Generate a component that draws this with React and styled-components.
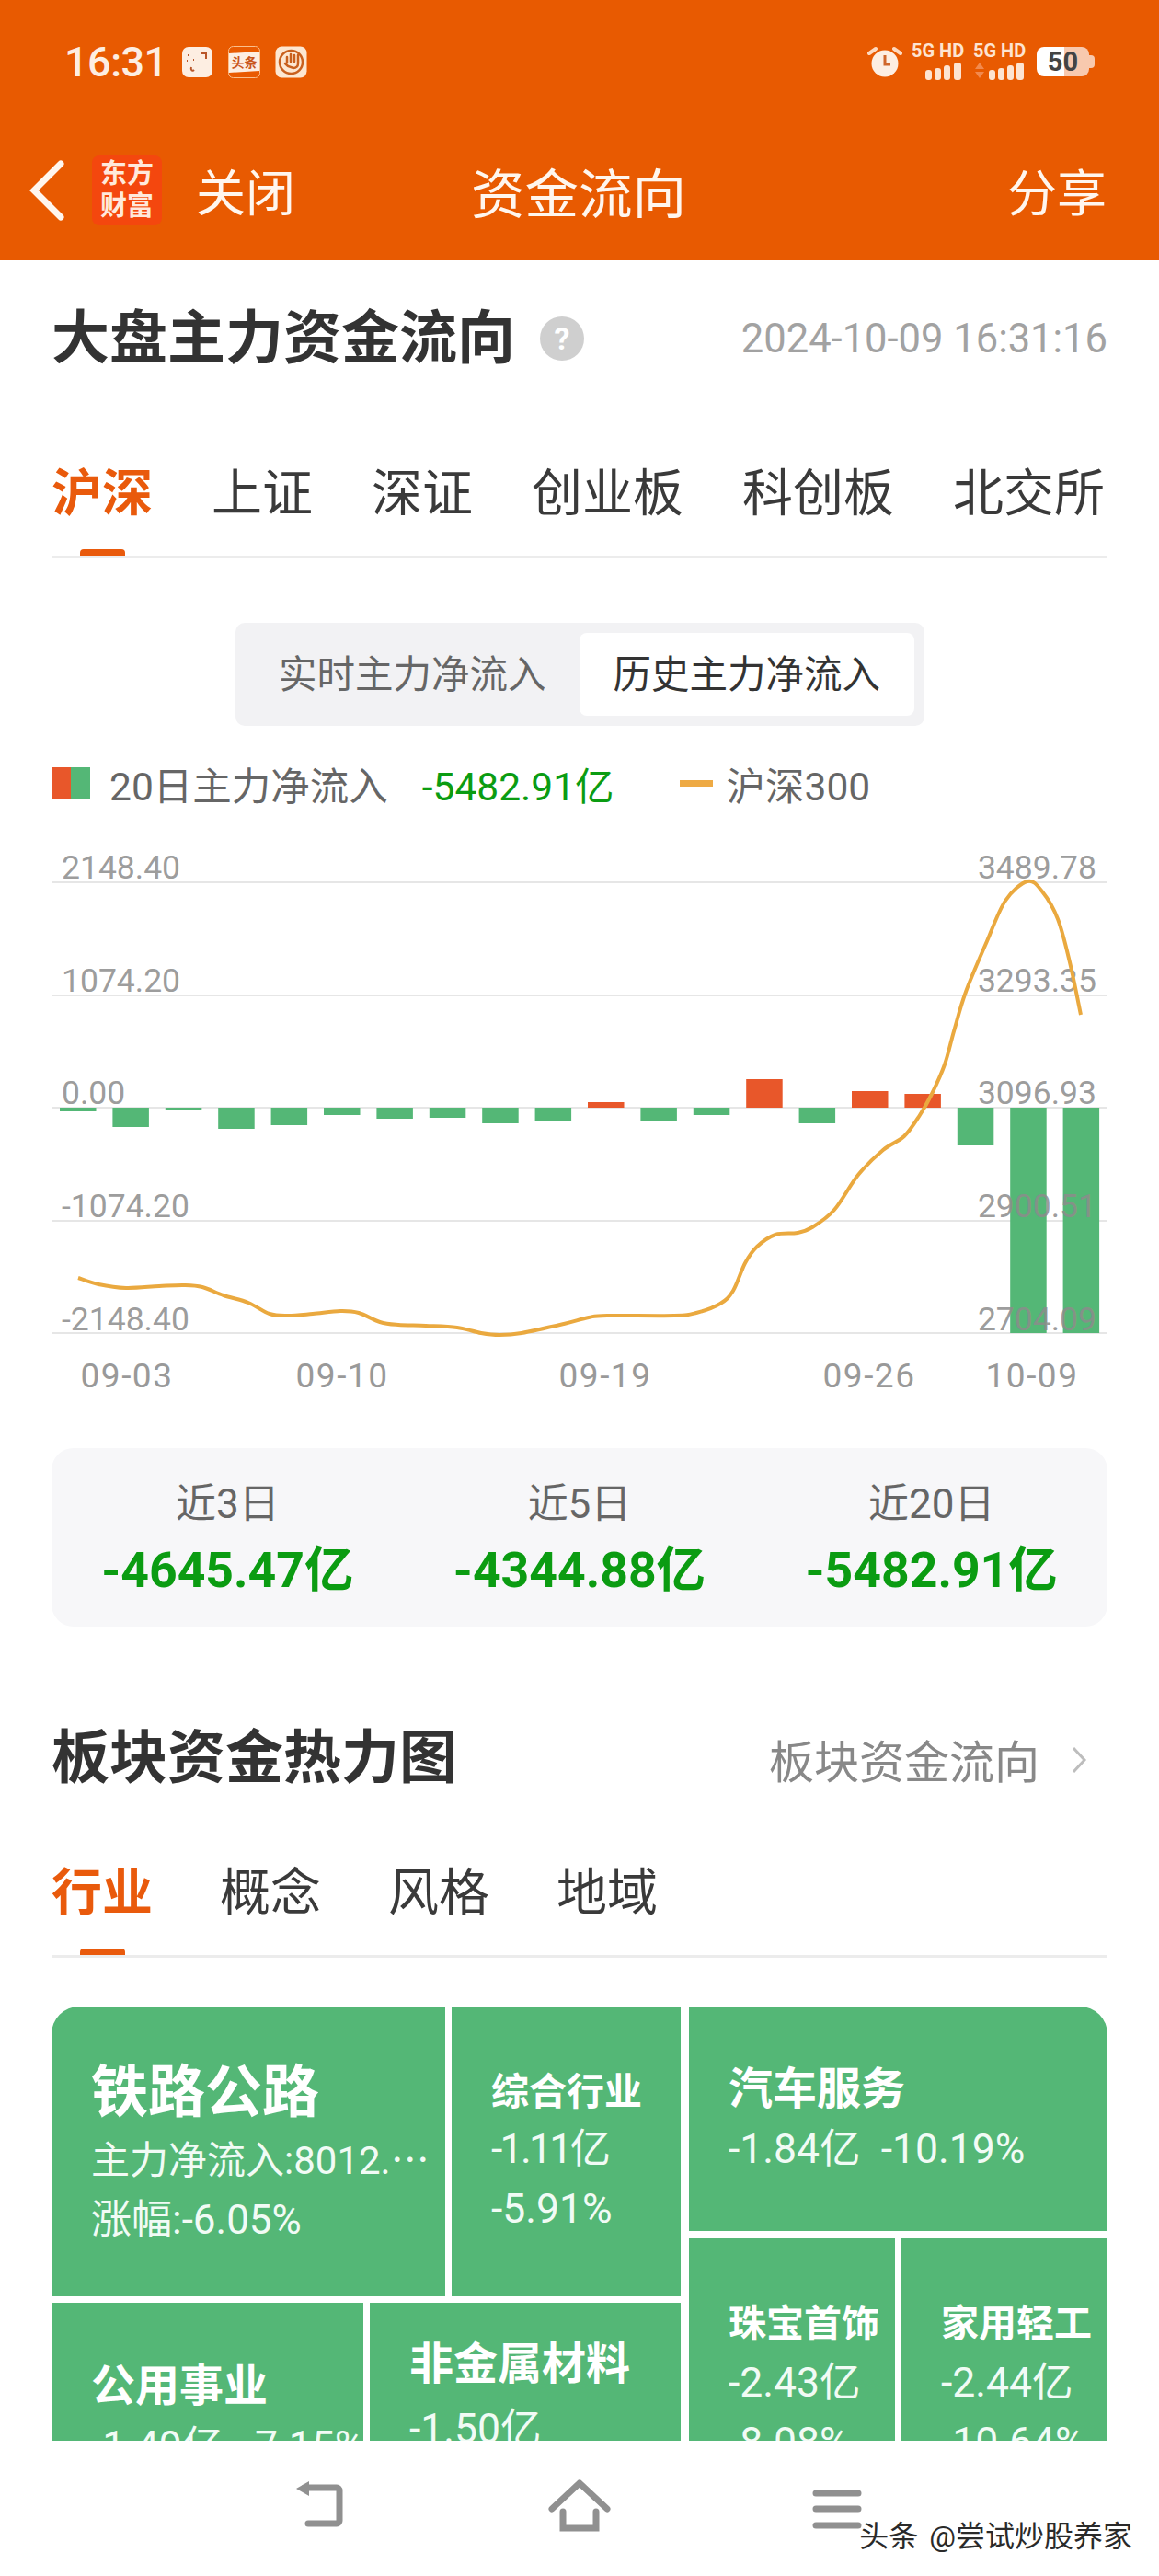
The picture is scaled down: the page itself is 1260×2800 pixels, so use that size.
import styled, { createGlobalStyle } from 'styled-components'

const GlobalStyle = createGlobalStyle`
  html, body {
    margin: 0;
    padding: 0;
    background: #fff;
  }
  body {
    font-family: Roboto, "Noto Sans CJK SC", sans-serif;
    color: #333;
  }
  * {
    box-sizing: border-box;
  }
`

const Page = styled.div`
  position: relative;
  width: 1260px;
  height: 2800px;
  display: flex;
  flex-direction: column;
  overflow: hidden;
  background: #fff;
`

// ------------------------------------------------ header
const Header = styled.header`
  height: 283px;
  flex: none;
  background: #e85a01;
  color: #fff6ee;
`
const StatusBar = styled.div`
  height: 134px;
  padding: 0 70px 0 70px;
  display: flex;
  align-items: center;
  justify-content: space-between;
`
const StatusLeft = styled.div`
  display: flex;
  align-items: center;
  gap: 16px;
`
const Clock = styled.span`
  font-size: 45px;
  font-weight: 500;
  width: 111px;
  letter-spacing: -0.5px;
  color: #fdeee2;
`
const AppBadge = styled.svg`
  display: block;
  width: 35px;
  height: 35px;
`
const StatusRight = styled.div`
  display: flex;
  align-items: center;
  gap: 10px;
`
const SignalStack = styled.div`
  display: flex;
  flex-direction: column;
  width: 57px;
  gap: 3px;
`
const SignalLabel = styled.span`
  font-size: 20px;
  line-height: 17px;
  font-weight: 700;
  white-space: nowrap;
  color: #fde4d2;
`
const SignalBars = styled.svg`
  display: block;
  width: 57px;
  height: 20px;
`
const Battery = styled.div`
  position: relative;
  width: 57px;
  height: 32px;
  margin-left: 2px;
  margin-right: 6px;
  border-radius: 8px;
  background: linear-gradient(90deg, #fff 53%, #f8c9ae 53%);
  color: #444;
  font-size: 29px;
  font-weight: 700;
  line-height: 32px;
  text-align: center;
  &::after {
    content: '';
    position: absolute;
    right: -6px;
    top: 9px;
    width: 6px;
    height: 14px;
    border-radius: 0 4px 4px 0;
    background: #f8c9ae;
  }
`
const NavBar = styled.div`
  height: 145px;
  padding: 0 57px 0 32px;
  display: grid;
  grid-template-columns: 482px 230px 1fr;
  align-items: center;
`
const NavLeft = styled.div`
  display: flex;
  align-items: center;
`
const BackIcon = styled.svg`
  display: block;
  width: 38px;
  height: 66px;
`
const AppLogo = styled.div`
  width: 76px;
  height: 76px;
  margin-left: 30px;
  padding-top: 3px;
  border-radius: 8px;
  background: #f4470e;
  font-size: 29px;
  line-height: 35px;
  font-weight: 700;
  text-align: center;
  color: #ffe9dc;
`
const CloseLabel = styled.span`
  margin-left: 37px;
  font-size: 54px;
`
const NavTitle = styled.div`
  font-size: 58.5px;
  white-space: nowrap;
  display: flex;
  justify-content: center;
`
const ShareLabel = styled.div`
  font-size: 54px;
  text-align: right;
`

// ------------------------------------------------ main column
const Main = styled.main`
  flex: 1;
  min-height: 0;
  padding: 0 56px;
  display: flex;
  flex-direction: column;
`
const TitleRow = styled.div`
  height: 170px;
  flex: none;
  display: flex;
  align-items: center;
`
const Heading = styled.h2`
  margin: 0;
  font-size: 63px;
  line-height: 70px;
  font-weight: 700;
  color: #333;
  white-space: nowrap;
`
const HelpDot = styled.span`
  width: 48px;
  height: 48px;
  margin-left: 27px;
  border-radius: 50%;
  background: #cfcfcf;
  color: #fff;
  font-size: 34px;
  font-weight: 700;
  line-height: 48px;
  text-align: center;
`
const Stamp = styled.span`
  margin-left: auto;
  font-size: 43.5px;
  color: #a2a2a2;
  white-space: nowrap;
`
const Tabs = styled.div`
  height: ${p => p.$height}px;
  flex: none;
  padding-top: ${p => p.$pad}px;
  display: flex;
  gap: ${p => p.$gap}px;
  border-bottom: 3px solid #ececec;
`
const Tab = styled.div`
  position: relative;
  font-size: 55px;
  line-height: 60px;
  font-weight: ${p => (p.$active ? 700 : 400)};
  color: ${p => (p.$active ? '#e95a0c' : '#3a3a3a')};
  &::after {
    content: '';
    display: ${p => (p.$active ? 'block' : 'none')};
    position: absolute;
    left: 50%;
    bottom: 0;
    width: 49px;
    height: 7px;
    margin-left: -24px;
    border-radius: 4px 4px 0 0;
    background: #e95a0c;
  }
`
const Segment = styled.div`
  width: 749px;
  height: 112px;
  margin: 70px auto 0;
  padding: 11px 11px;
  flex: none;
  display: flex;
  border-radius: 10px;
  background: #f2f2f4;
`
const SegmentItem = styled.div`
  flex: 1;
  border-radius: 8px;
  background: ${p => (p.$on ? '#fff' : 'transparent')};
  color: ${p => (p.$on ? '#333' : '#666')};
  font-size: 41.5px;
  line-height: 91px;
  text-align: center;
  white-space: nowrap;
`
const Legend = styled.div`
  height: 60px;
  margin-top: 32px;
  flex: none;
  display: flex;
  align-items: center;
  font-size: 42.5px;
  color: #666;
`
const LegendSwatch = styled.span`
  width: 42px;
  height: 35px;
  margin-right: 21px;
  background: linear-gradient(90deg, #e8572a 50%, #54b776 50%);
`
const LegendValue = styled.span`
  margin-left: 37px;
  color: #0b9c12;
`
const LegendDash = styled.span`
  width: 36px;
  height: 7px;
  margin: 0 15px 0 71px;
  background: #eeaa44;
`
const ChartBox = styled.svg`
  display: block;
  flex: none;
  width: 1148px;
  height: 660px;
`
const AxisText = styled.text`
  font-family: Roboto, sans-serif;
  font-size: 35.5px;
  fill: rgba(140, 140, 140, 0.87);
`
const DateText = styled.text`
  font-family: Roboto, sans-serif;
  font-size: 37px;
  letter-spacing: 1.5px;
  fill: #999;
`
const StatCard = styled.div`
  height: 194px;
  margin-top: 33px;
  padding-top: 36px;
  flex: none;
  display: grid;
  grid-template-columns: repeat(3, 1fr);
  border-radius: 24px;
  background: #f7f7f9;
  text-align: center;
`
const StatLabel = styled.div`
  font-size: 44px;
  line-height: 50px;
  color: #666;
`
const StatValue = styled.div`
  margin-top: 17px;
  font-size: 53.5px;
  line-height: 60px;
  font-weight: 700;
  color: #0b9c12;
  white-space: nowrap;
`
const SectionHead = styled.div`
  height: 60px;
  margin-top: 113px;
  flex: none;
  display: flex;
  align-items: center;
  justify-content: space-between;
`
const MoreLink = styled.div`
  display: flex;
  align-items: center;
  gap: 35px;
  padding-right: 22px;
  font-size: 49px;
  color: #888;
`
const MoreArrow = styled.svg`
  display: block;
  width: 17px;
  height: 32px;
  margin-top: 4px;
`

// ------------------------------------------------ treemap
const Treemap = styled.div`
  flex: 1;
  min-height: 0;
  margin-top: 53px;
  display: flex;
  align-items: flex-start;
  gap: 9px;
  overflow: hidden;
  border-radius: 30px 30px 0 0;
`
const TreeColumn = styled.div`
  width: ${p => p.$w}px;
  flex: none;
  display: flex;
  flex-direction: column;
  gap: ${p => p.$gap}px;
`
const TreeRow = styled.div`
  display: flex;
  gap: 7px;
`
const Tile = styled.div`
  width: ${p => p.$w}px;
  height: ${p => p.$h}px;
  flex: none;
  padding: ${p => p.$top}px 0 0 43px;
  background: #54b776;
  color: #fff;
  overflow: hidden;
  white-space: pre;
`
const TileName = styled.div`
  font-size: ${p => p.$size}px;
  line-height: ${p => p.$line}px;
  font-weight: 700;
`
const TileLine = styled.div`
  margin-top: ${p => p.$gap || 0}px;
  font-size: ${p => p.$size || 44.5}px;
  line-height: ${p => p.$line || 65}px;
  letter-spacing: ${p => p.$track || 0}px;
  color: #f1fbf5;
`

// ------------------------------------------------ bottom nav
const BottomNav = styled.nav`
  height: 147px;
  flex: none;
  padding-top: 41px;
  display: flex;
  justify-content: center;
  align-items: flex-start;
  gap: 210px;
`
const NavIcon = styled.svg`
  display: block;
  width: 70px;
  height: 62px;
`
const Watermark = styled.div`
  position: absolute;
  right: 29px;
  top: 2737px;
  display: flex;
  gap: 12px;
  font-size: 32px;
  line-height: 40px;
  color: #2a2a2a;
  text-shadow: 0 0 3px #fff, 0 0 3px #fff;
  white-space: nowrap;
`

// chart data, px measured from the zero line (positive = up)
const barHeights = [-4, -21, -3, -23, -19, -8, -12, -11, -17, -15, 6, -14, -8, 31, -17, 18, 15, -41, -245, -245]
const linePoints = [
  [85, 1389], [107, 1396], [137, 1400], [173, 1398], [200, 1397], [220, 1399], [243, 1408], [270, 1416],
  [293, 1428], [313, 1430], [340, 1428], [370, 1425], [390, 1427], [413, 1437], [433, 1440], [463, 1441],
  [497, 1443], [523, 1449], [543, 1451], [567, 1449], [613, 1439], [640, 1432], [660, 1430], [733, 1430],
  [757, 1427], [783, 1417], [797, 1403], [810, 1373], [823, 1355], [843, 1342], [867, 1340], [883, 1334],
  [907, 1315], [933, 1277], [960, 1250], [983, 1235], [1000, 1212], [1013, 1189], [1027, 1157], [1037, 1121],
  [1050, 1078], [1073, 1023], [1093, 979], [1117, 958], [1133, 969], [1150, 999], [1163, 1046], [1175, 1103],
]
const gridLines = [959, 1082, 1204, 1327, 1449]
const leftLabels = [[955, '2148.40'], [1078, '1074.20'], [1200, '0.00'], [1323, '-1074.20'], [1446, '-2148.40']]
const rightLabels = [[955, '3489.78'], [1078, '3293.35'], [1200, '3096.93'], [1323, '2900.51'], [1446, '2704.09']]
const dateLabels = [[138, '09-03'], [372, '09-10'], [658, '09-19'], [945, '09-26'], [1122, '10-09']]

const smoothPath = pts => {
  let d = `M${pts[0][0]} ${pts[0][1]}`
  for (let i = 0; i < pts.length - 1; i++) {
    const p0 = pts[i - 1] || pts[i]
    const p1 = pts[i]
    const p2 = pts[i + 1]
    const p3 = pts[i + 2] || p2
    const c1x = p1[0] + (p2[0] - p0[0]) / 6
    const c1y = p1[1] + (p2[1] - p0[1]) / 6
    const c2x = p2[0] - (p3[0] - p1[0]) / 6
    const c2y = p2[1] - (p3[1] - p1[1]) / 6
    d += ` C${c1x} ${c1y} ${c2x} ${c2y} ${p2[0]} ${p2[1]}`
  }
  return d
}

const Chart = () => (
  <ChartBox viewBox="56 881 1148 660">
    {gridLines.map(y => (
      <line key={y} x1="56" x2="1204" y1={y} y2={y} stroke="#e6e6e6" strokeWidth="2" />
    ))}
    {barHeights.map((h, i) => (
      <rect
        key={i}
        x={65 + i * 57.4}
        y={h > 0 ? 1204 - h : 1204}
        width="39.5"
        height={Math.abs(h)}
        fill={h > 0 ? '#e8572a' : '#54b776'}
      />
    ))}
    {leftLabels.map(([y, t]) => (
      <AxisText key={t} x="67" y={y}>{t}</AxisText>
    ))}
    {rightLabels.map(([y, t]) => (
      <AxisText key={t} x="1192" y={y} textAnchor="end">{t}</AxisText>
    ))}
    {dateLabels.map(([x, t]) => (
      <DateText key={t} x={x} y="1508" textAnchor="middle">{t}</DateText>
    ))}
    <path d={smoothPath(linePoints)} fill="none" stroke="#eaa93f" strokeWidth="4" strokeLinejoin="round" />
  </ChartBox>
)

const Signal = ({ arrows }) => (
  <SignalBars viewBox="0 0 57 20">
    {arrows && <path d="M7 1l5 7H2zM2 11h10l-5 7z" fill="#f28a4e" />}
    <rect x={arrows ? 17 : 15} y="9" width="7" height="11" rx="3" fill="#fde4d2" />
    <rect x={arrows ? 27 : 25} y="7" width="7" height="13" rx="3" fill="#fde4d2" />
    <rect x={arrows ? 37 : 35} y="4" width="7" height="16" rx="3" fill="#fde4d2" />
    <rect x={arrows ? 47 : 46} y="1" width="8" height="19" rx="3" fill="#fde4d2" />
  </SignalBars>
)

const App = () => {
  return (
    <Page>
      <GlobalStyle />
      <Header>
        <StatusBar>
          <StatusLeft>
            <Clock>16:31</Clock>
            <AppBadge viewBox="0 0 35 35">
              <rect x="1" y="1" width="33" height="33" rx="7" fill="#fdeee2" />
              <path d="M21 8h6v6" fill="none" stroke="#b9562a" strokeWidth="2" />
              <path d="M7 10h2M6 16h1M13 15h1M11 23c-1 3 1 5 3 3" fill="none" stroke="#b9562a" strokeWidth="2" />
            </AppBadge>
            <AppBadge viewBox="0 0 35 35">
              <rect x="0.5" y="0.5" width="34" height="34" rx="5" fill="#e95a01" stroke="#fbbf8c" />
              <path d="M1 8l33-2v21L1 29z" fill="#fdeee2" />
              <text x="17.5" y="23" fontSize="14" fontWeight="700" fill="#c9541a" textAnchor="middle">头条</text>
            </AppBadge>
            <AppBadge viewBox="0 0 35 35">
              <rect x="0.5" y="0.5" width="34" height="34" rx="7" fill="#fde7d2" />
              <circle cx="17.5" cy="17.5" r="12.5" fill="none" stroke="#c9601e" strokeWidth="2.5" />
              <path d="M11 19l3 3 6 2c3 0 5-2 5-5v-9M21 10v7M17 9v8M13 12v6" fill="none" stroke="#c9601e" strokeWidth="2.5" strokeLinecap="round" />
            </AppBadge>
          </StatusLeft>
          <StatusRight>
            <svg width="38" height="34" viewBox="0 0 38 34">
              <circle cx="19" cy="19" r="14.5" fill="#fdeee2" />
              <path d="M19 10v10h6" fill="none" stroke="#d0662a" strokeWidth="3" />
              <path d="M2 8l7-5M36 8l-7-5" stroke="#fdd9bf" strokeWidth="4" strokeLinecap="round" />
            </svg>
            <SignalStack>
              <SignalLabel>5G HD</SignalLabel>
              <Signal />
            </SignalStack>
            <SignalStack>
              <SignalLabel>5G HD</SignalLabel>
              <Signal arrows />
            </SignalStack>
            <Battery>50</Battery>
          </StatusRight>
        </StatusBar>
        <NavBar>
          <NavLeft>
            <BackIcon viewBox="0 0 38 66">
              <path d="M34 4L5 33l29 29" fill="none" stroke="#fff6ee" strokeWidth="7" strokeLinecap="round" />
            </BackIcon>
            <AppLogo>东方<br />财富</AppLogo>
            <CloseLabel>关闭</CloseLabel>
          </NavLeft>
          <NavTitle>资金流向</NavTitle>
          <ShareLabel>分享</ShareLabel>
        </NavBar>
      </Header>

      <Main>
        <TitleRow>
          <Heading>大盘主力资金流向</Heading>
          <HelpDot>?</HelpDot>
          <Stamp>2024-10-09 16:31:16</Stamp>
        </TitleRow>
        <Tabs $height={154} $pad={53} $gap={64}>
          <Tab $active>沪深</Tab>
          <Tab>上证</Tab>
          <Tab>深证</Tab>
          <Tab>创业板</Tab>
          <Tab>科创板</Tab>
          <Tab>北交所</Tab>
        </Tabs>
        <Segment>
          <SegmentItem>实时主力净流入</SegmentItem>
          <SegmentItem $on>历史主力净流入</SegmentItem>
        </Segment>
        <Legend>
          <LegendSwatch />
          20日主力净流入
          <LegendValue>-5482.91亿</LegendValue>
          <LegendDash />
          沪深300
        </Legend>
        <Chart />
        <StatCard>
          <div>
            <StatLabel>近3日</StatLabel>
            <StatValue>-4645.47亿</StatValue>
          </div>
          <div>
            <StatLabel>近5日</StatLabel>
            <StatValue>-4344.88亿</StatValue>
          </div>
          <div>
            <StatLabel>近20日</StatLabel>
            <StatValue>-5482.91亿</StatValue>
          </div>
        </StatCard>
        <SectionHead>
          <Heading>板块资金热力图</Heading>
          <MoreLink>
            板块资金流向
            <MoreArrow viewBox="0 0 17 32">
              <path d="M2 3l12 13L2 29" fill="none" stroke="#bdbdbd" strokeWidth="3" />
            </MoreArrow>
          </MoreLink>
        </SectionHead>
        <Tabs $height={187} $pad={86} $gap={73}>
          <Tab $active>行业</Tab>
          <Tab>概念</Tab>
          <Tab>风格</Tab>
          <Tab>地域</Tab>
        </Tabs>
        <Treemap>
          <TreeColumn $w={684} $gap={7}>
            <TreeRow>
              <Tile $w={428} $h={315} $top={59}>
                <TileName $size={62} $line={70}>铁路公路</TileName>
                <TileLine $gap={7} $line={64} $size={42}>主力净流入:8012.⋯</TileLine>
                <TileLine $line={64} $size={44}>涨幅:-6.05%</TileLine>
              </Tile>
              <Tile $w={249} $h={315} $top={68}>
                <TileName $size={41} $line={50}>综合行业</TileName>
                <TileLine $gap={5} $track={-2.7}>-1.11亿</TileLine>
                <TileLine>-5.91%</TileLine>
              </Tile>
            </TreeRow>
            <TreeRow>
              <Tile $w={339} $h={300} $top={63}>
                <TileName $size={48} $line={56}>公用事业</TileName>
                <TileLine $gap={5}>-1.49亿  -7.15%</TileLine>
              </Tile>
              <Tile $w={338} $h={300} $top={39}>
                <TileName $size={48} $line={56}>非金属材料</TileName>
                <TileLine $gap={10}>-1.50亿</TileLine>
              </Tile>
            </TreeRow>
          </TreeColumn>
          <TreeColumn $w={455} $gap={8}>
            <Tile $w={455} $h={244} $top={62}>
              <TileName $size={48} $line={56}>汽车服务</TileName>
              <TileLine $gap={5}>-1.84亿  -10.19%</TileLine>
            </Tile>
            <TreeRow>
              <Tile $w={224} $h={300} $top={68}>
                <TileName $size={41} $line={50}>珠宝首饰</TileName>
                <TileLine $gap={7}>-2.43亿</TileLine>
                <TileLine>-8.08%</TileLine>
              </Tile>
              <Tile $w={225} $h={300} $top={68}>
                <TileName $size={41} $line={50}>家用轻工</TileName>
                <TileLine $gap={7}>-2.44亿</TileLine>
                <TileLine>-10.64%</TileLine>
              </Tile>
            </TreeRow>
          </TreeColumn>
        </Treemap>
      </Main>

      <BottomNav>
        <NavIcon viewBox="0 0 70 62">
          <path d="M16 10h35a3 3 0 0 1 3 3v33a3 3 0 0 1-3 3H20" fill="none" stroke="#909090" strokeWidth="7" strokeLinecap="round" />
          <path d="M7 11L21 3v16z" fill="#909090" />
        </NavIcon>
        <NavIcon viewBox="0 0 70 62">
          <path d="M5 33L35 5l30 28" fill="none" stroke="#909090" strokeWidth="7" strokeLinecap="round" strokeLinejoin="round" />
          <path d="M17 36v18h36V36" fill="none" stroke="#909090" strokeWidth="7" strokeLinecap="round" />
        </NavIcon>
        <NavIcon viewBox="0 0 70 62">
          <path d="M12 16h46M12 33h46M12 51h46" fill="none" stroke="#909090" strokeWidth="7" strokeLinecap="round" />
        </NavIcon>
      </BottomNav>
      <Watermark>
        <span>头条</span>
        <span>@尝试炒股养家</span>
      </Watermark>
    </Page>
  )
}

export default App
